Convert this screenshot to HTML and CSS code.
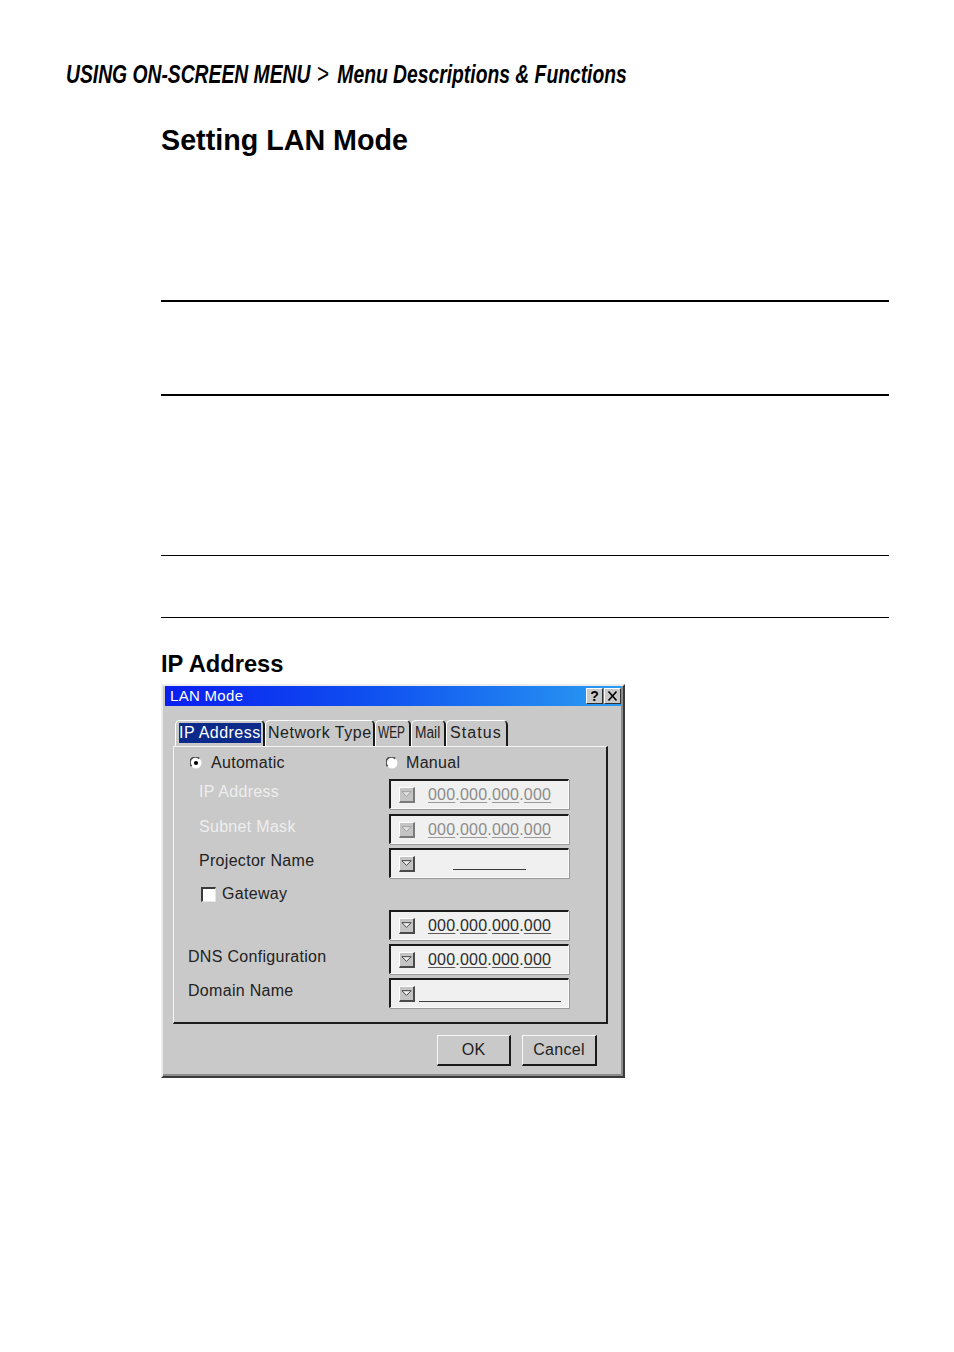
FILE: index.html
```html
<!DOCTYPE html>
<html>
<head>
<meta charset="utf-8">
<link rel="stylesheet" href="styles.css">
</head>
<body>
<div class="crumb"><span class="crumb-b">USING ON-SCREEN MENU</span><span class="crumb-sep">&gt;</span><span class="crumb-b">Menu Descriptions &amp; Functions</span></div>
<div class="main">
  <h1 class="title">Setting LAN Mode</h1>
  <div class="rule thick r1"></div>
  <div class="rule thick r2"></div>
  <div class="rule thin r3"></div>
  <div class="rule thin r4"></div>
  <h2 class="sub">IP Address</h2>

  <div class="dialog">
    <div class="titlebar">
      <span class="ttext">LAN Mode</span>
      <span class="tbtns">
        <span class="tbtn q">?</span>
        <span class="tbtn"><svg width="13" height="12" viewBox="0 0 13 12"><path d="M2.5 1.5 L10.5 10.5 M10.5 1.5 L2.5 10.5" stroke="#000" stroke-width="1.6" fill="none"/></svg></span>
      </span>
    </div>
    <div class="dbody">
      <div class="tabs">
        <div class="tab sel t1"><span class="hl">IP Address</span></div>
        <div class="tab t2">Network Type</div>
        <div class="tab t3"><span class="narrow">WEP</span></div>
        <div class="tab t4"><span class="narrow2">Mail</span></div>
        <div class="tab t5"><span class="wide">Status</span></div>
      </div>
      <div class="panel">
        <div class="row rradio">
          <div class="radio r-auto">
            <svg width="12" height="12" viewBox="0 0 12 12"><circle cx="6" cy="6" r="5.5" fill="#fff"/><path d="M1.6 9.2 A5 5 0 0 1 9.2 1.6" stroke="#505050" stroke-width="1.6" fill="none"/><circle cx="6" cy="6" r="2.1" fill="#000"/></svg>
            <span>Automatic</span>
          </div>
          <div class="radio r-man">
            <svg width="12" height="12" viewBox="0 0 12 12"><circle cx="6" cy="6" r="5.5" fill="#fff"/><path d="M1.6 9.2 A5 5 0 0 1 9.2 1.6" stroke="#505050" stroke-width="1.6" fill="none"/></svg>
            <span>Manual</span>
          </div>
        </div>

        <div class="row rip">
          <div class="lab ind dis">IP Address</div>
          <div class="field">
            <span class="dd dis"><svg width="14" height="14" viewBox="0 0 14 14"><path d="M2 4.5 L12 4.5 L7 9.5 Z" fill="#e4e4e4" stroke="#9c9c9c" stroke-width="1"/></svg></span>
            <span class="ipv dis"><u>000</u>.<u>000</u>.<u>000</u>.<u>000</u></span>
          </div>
        </div>

        <div class="row rsub">
          <div class="lab ind dis">Subnet Mask</div>
          <div class="field">
            <span class="dd dis"><svg width="14" height="14" viewBox="0 0 14 14"><path d="M2 4.5 L12 4.5 L7 9.5 Z" fill="#e4e4e4" stroke="#9c9c9c" stroke-width="1"/></svg></span>
            <span class="ipv dis"><u>000</u>.<u>000</u>.<u>000</u>.<u>000</u></span>
          </div>
        </div>

        <div class="row rproj">
          <div class="lab ind">Projector Name</div>
          <div class="field">
            <span class="dd"><svg width="14" height="14" viewBox="0 0 14 14"><path d="M2 4.5 L12 4.5 L7 9.5 Z" fill="#f2f2f2" stroke="#3a3a3a" stroke-width="1"/></svg></span>
            <span class="blank bproj"></span>
          </div>
        </div>

        <div class="row rgw">
          <div class="check"><span class="cbox"></span><span>Gateway</span></div>
        </div>

        <div class="row rgwf">
          <div class="lab"></div>
          <div class="field">
            <span class="dd"><svg width="14" height="14" viewBox="0 0 14 14"><path d="M2 4.5 L12 4.5 L7 9.5 Z" fill="#f2f2f2" stroke="#3a3a3a" stroke-width="1"/></svg></span>
            <span class="ipv"><u>000</u>.<u>000</u>.<u>000</u>.<u>000</u></span>
          </div>
        </div>

        <div class="row rdns">
          <div class="lab">DNS Configuration</div>
          <div class="field">
            <span class="dd"><svg width="14" height="14" viewBox="0 0 14 14"><path d="M2 4.5 L12 4.5 L7 9.5 Z" fill="#f2f2f2" stroke="#3a3a3a" stroke-width="1"/></svg></span>
            <span class="ipv"><u>000</u>.<u>000</u>.<u>000</u>.<u>000</u></span>
          </div>
        </div>

        <div class="row rdom">
          <div class="lab">Domain Name</div>
          <div class="field">
            <span class="dd"><svg width="14" height="14" viewBox="0 0 14 14"><path d="M2 4.5 L12 4.5 L7 9.5 Z" fill="#f2f2f2" stroke="#3a3a3a" stroke-width="1"/></svg></span>
            <span class="blank bdom"></span>
          </div>
        </div>
      </div>
      <div class="buttons">
        <div class="btn ok">OK</div>
        <div class="btn cancel">Cancel</div>
      </div>
    </div>
  </div>
</div>
</body>
</html>
```
FILE: styles.css
```css
body {
  margin: 0;
  background: #fff;
  color: #000;
}

.crumb {
  margin-top: 59px;
  margin-left: 66px;
  height: 30px;
  line-height: 30px;
  font-family: "Liberation Sans", Arial, sans-serif;
  font-size: 26px;
  white-space: nowrap;
  transform: scaleX(0.742);
  transform-origin: left center;
}

.crumb-b {
  font-weight: 700;
  font-style: italic;
}

.crumb-sep {
  font-weight: 400;
  font-size: 28px;
  margin: 0 11px 0 9px;
}

.main {
  padding-left: 161px;
}

.title {
  margin: 34px 0 0 0;
  height: 34px;
  line-height: 34px;
  font-family: "Liberation Sans", Arial, sans-serif;
  font-weight: 700;
  font-size: 28.7px;
}

.rule {
  width: 728px;
  background: #000;
}
.thick { height: 2px; }
.thin { height: 1px; }
.r1 { margin-top: 143px; }
.r2 { margin-top: 92px; }
.r3 { margin-top: 159px; }
.r4 { margin-top: 61px; }

.sub {
  margin: 32px 0 0 0;
  height: 28px;
  line-height: 28px;
  font-family: "Liberation Sans", Arial, sans-serif;
  font-weight: 700;
  font-size: 23.7px;
}

/* dialog */
.dialog {
  margin-top: 6px;
  width: 464px;
  height: 394px;
  box-sizing: border-box;
  background: #c9c9c9;
  border: 2px solid;
  border-color: #ececec #3a3a3a #3a3a3a #ececec;
  box-shadow: inset -2px -2px 0 #8c8c8c;
  font-family: "Liberation Sans", Arial, sans-serif;
  font-size: 16px;
  letter-spacing: 0.3px;
  color: #222;
}

.titlebar {
  margin: 0 2px;
  height: 20px;
  display: flex;
  align-items: center;
  justify-content: space-between;
  background: linear-gradient(90deg, #0a1ef0 0%, #0f50f0 45%, #2a9cf2 100%);
}

.ttext {
  padding-left: 5px;
  color: #fff;
  font-size: 15px;
  line-height: 20px;
}

.tbtns {
  display: flex;
  gap: 1px;
}

.tbtn {
  width: 17px;
  height: 16px;
  box-sizing: border-box;
  background: #c9c9c9;
  border-top: 1px solid #fff;
  border-left: 1px solid #fff;
  border-right: 1px solid #303030;
  border-bottom: 1px solid #303030;
  display: flex;
  align-items: center;
  justify-content: center;
}

.tbtn.q {
  font-weight: 700;
  font-size: 14px;
  line-height: 14px;
  color: #000;
  letter-spacing: 0;
}

.dbody {
  padding: 14px 15px 0 10px;
}

.tabs {
  display: flex;
  margin-left: 2px;
  height: 26px;
}

.tab {
  flex: none;
  height: 26px;
  box-sizing: border-box;
  padding: 0 0 0 2px;
  border-top: 1px solid #fff;
  border-left: 1px solid #fff;
  border-right: 2px solid #1a1a1a;
  border-radius: 5px 5px 0 0;
  line-height: 23px;
  white-space: nowrap;
  color: #222;
}

.t1 { width: 90px; padding-left: 3px; letter-spacing: 0.45px; }
.t2 { width: 110px; letter-spacing: 0.5px; }
.t3 { width: 36px; padding-left: 2px; }
.t4 { width: 35px; padding-left: 3px; }
.t5 { width: 62px; padding-left: 3px; }

.hl {
  background: #0c2a8a;
  color: #fff;
  display: inline-block;
  line-height: 20px;
}

.narrow {
  display: inline-block;
  letter-spacing: 0;
  transform: scaleX(0.74);
  transform-origin: left center;
}

.narrow2 {
  display: inline-block;
  letter-spacing: 0;
  transform: scaleX(0.86);
  transform-origin: left center;
}

.wide {
  letter-spacing: 1.1px;
}

.panel {
  height: 278px;
  box-sizing: border-box;
  border-top: 1px solid #f4f4f4;
  border-left: 1px solid #f4f4f4;
  border-right: 2px solid #1c1c1c;
  border-bottom: 2px solid #1c1c1c;
  display: flex;
  flex-direction: column;
}

.row {
  display: flex;
  align-items: center;
  height: 30px;
}

.rradio { height: 26px; margin-top: 3px; }
.rip { margin-top: 3px; }
.rsub { margin-top: 5px; }
.rproj { margin-top: 4px; }
.rgw { height: 20px; margin-top: 6px; }
.rgwf { margin-top: 6px; }
.rdns { margin-top: 4px; }
.rdom { margin-top: 4px; }

.radio {
  display: flex;
  align-items: center;
  gap: 9px;
}
.radio svg { display: block; }
.r-auto { width: 196px; padding-left: 16px; }
.r-man { gap: 8px; }

.lab {
  width: 215px;
  box-sizing: border-box;
  padding-left: 14px;
  padding-bottom: 4px;
  white-space: nowrap;
}
.lab.ind { padding-left: 25px; }
.lab.dis { color: #eeeeee; }

.check {
  display: flex;
  align-items: center;
  gap: 6px;
  padding-left: 27px;
}

.cbox {
  width: 15px;
  height: 15px;
  box-sizing: border-box;
  background: #fff;
  border-top: 2px solid #3a3a3a;
  border-left: 2px solid #3a3a3a;
  border-right: 1px solid #e6e6e6;
  border-bottom: 1px solid #e6e6e6;
}

.field {
  width: 180px;
  height: 30px;
  box-sizing: border-box;
  background: #f0f0f0;
  border-top: 2px solid #1c1c1c;
  border-left: 2px solid #1c1c1c;
  border-right: 1px solid #fafafa;
  border-bottom: 1px solid #fafafa;
  box-shadow: 1px 1px 0 #9a9a9a;
  display: flex;
  align-items: center;
  padding-left: 8px;
}

.dd {
  width: 16px;
  height: 16px;
  box-sizing: border-box;
  background: #c4c4c4;
  border-top: 1px solid #fff;
  border-left: 1px solid #fff;
  border-right: 2px solid #4a4a4a;
  border-bottom: 2px solid #4a4a4a;
  display: flex;
  align-items: center;
  justify-content: center;
}
.dd svg { display: block; }
.dd.dis { border-right-color: #7a7a7a; border-bottom-color: #7a7a7a; }

.ipv {
  margin-left: 13px;
  color: #2c2c2c;
  letter-spacing: 0.2px;
  white-space: nowrap;
}
.ipv u {
  text-decoration: underline;
  text-decoration-color: #5a5a5a;
  text-underline-offset: 2px;
}
.ipv.dis { color: #8c8c8c; }
.ipv.dis u { text-decoration-color: #9a9a9a; }

.blank {
  align-self: flex-end;
  margin-bottom: 5px;
  height: 1px;
  background: #3a3a3a;
}
.bproj { margin-left: 38px; width: 73px; margin-bottom: 7px; }
.bdom { margin-left: 4px; width: 142px; }

.buttons {
  display: flex;
  justify-content: flex-end;
  gap: 11px;
  margin-top: 11px;
  padding-right: 11px;
}

.btn {
  height: 31px;
  box-sizing: border-box;
  background: #c9c9c9;
  border-top: 1px solid #f8f8f8;
  border-left: 1px solid #f8f8f8;
  border-right: 2px solid #1a1a1a;
  border-bottom: 2px solid #1a1a1a;
  display: flex;
  align-items: center;
  justify-content: center;
  color: #222;
}
.ok { width: 74px; }
.cancel { width: 75px; }
```
